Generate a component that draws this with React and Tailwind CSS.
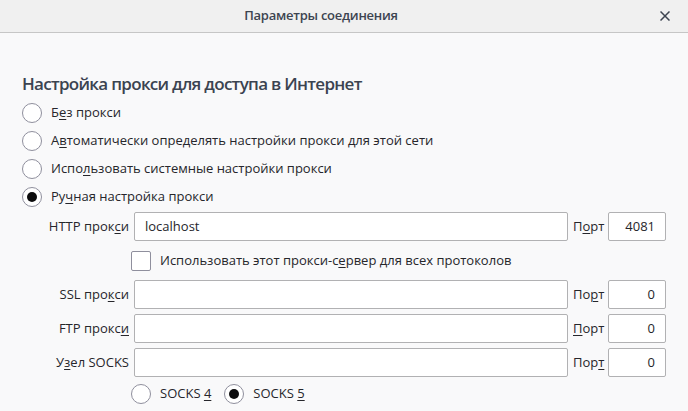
import React from "react";

const U = ({ children }) => (
  <u className="underline decoration-1 underline-offset-[2px]">{children}</u>
);

const Radio = ({ checked }) => (
  <span className="w-[20px] h-[20px] rounded-full border border-[#8f8f9d] bg-white flex items-center justify-center shrink-0">
    {checked && <span className="w-[10px] h-[10px] rounded-full bg-[#0c0c0d]" />}
  </span>
);

const TextBox = ({ value = "", className = "" }) => (
  <div
    className={`h-[29px] bg-white border border-[#b1b1b3] rounded-[2px] flex items-center px-[10px] shrink-0 ${className}`}
  >
    {value}
  </div>
);

const modes = [
  { label: <>Б<U>е</U>з прокси</> },
  { label: <>А<U>в</U>томатически определять настройки прокси для этой сети</> },
  { label: <>Испо<U>л</U>ьзовать системные настройки прокси</> },
  { label: <>Ру<U>ч</U>ная настройка прокси</>, checked: true },
];

const ProxyRow = ({ label, portLabel, host, port }) => (
  <div className="flex items-center h-[29px]">
    <div className="w-[113px] pr-[5px] text-right whitespace-nowrap">{label}</div>
    <TextBox value={host} className="w-[434px]" />
    <div className="ml-[5px] w-[30px] whitespace-nowrap">{portLabel}</div>
    <TextBox value={port} className="ml-[5px] w-[58px] justify-end" />
  </div>
);

export default function App() {
  return (
    <div className="w-[688px] h-[411px] overflow-hidden bg-[#f9f9fa] text-[13px] text-[#26262b] font-['Open_Sans',sans-serif]">
      {/* Title bar */}
      <div className="h-[33px] bg-[#f0f0f0] border-b border-[#c6c6c6] flex items-center">
        <div className="flex-1 text-center font-semibold text-[#3d4450] tracking-[-0.25px]">
          Параметры соединения
        </div>
        <button className="w-[46px] h-full flex items-center justify-center text-[#3d4450]">
          <svg width="10" height="10" viewBox="0 0 10 10" fill="none">
            <path d="M0.5 0.5L9.5 9.5M9.5 0.5L0.5 9.5" stroke="currentColor" strokeWidth="1.5" />
          </svg>
        </button>
      </div>

      <div className="px-[22px]">
        <h2 className="mt-[37px] h-[28px] flex items-center text-[17px] font-semibold text-[#3b4350] tracking-[-0.7px]">
          Настройка прокси для доступа в Интернет
        </h2>

        {/* Mode radios */}
        <div className="mt-[1px] flex flex-col">
          {modes.map((m, i) => (
            <div key={i} className="h-[28px] flex items-center gap-[9px]">
              <Radio checked={m.checked} />
              <span>{m.label}</span>
            </div>
          ))}
        </div>

        {/* Manual settings */}
        <div className="mt-[1px]">
          <ProxyRow
            label={<>HTTP прок<U>с</U>и</>}
            portLabel={<>П<U>о</U>рт</>}
            host="localhost"
            port="4081"
          />

          <div className="h-[39px] flex items-center pl-[109px] gap-[9px]">
            <span className="w-[20px] h-[20px] bg-white border border-[#8f8f9d] rounded-[2px]" />
            <span>
              Использовать этот прокси-с<U>е</U>рвер для всех протоколов
            </span>
          </div>

          <div className="flex flex-col gap-[5px]">
            <ProxyRow
              label={<>SSL про<U>к</U>си</>}
              portLabel={<>По<U>р</U>т</>}
              port="0"
            />
            <ProxyRow
              label={<>FTP прокс<U>и</U></>}
              portLabel={<><U>П</U>орт</>}
              port="0"
            />
            <ProxyRow
              label={<>У<U>з</U>ел SOCKS</>}
              portLabel={<>Пор<U>т</U></>}
              port="0"
            />
          </div>

          <div className="mt-[6px] h-[22px] pl-[109px] flex items-center gap-[13px]">
            <div className="flex items-center gap-[9px]">
              <Radio />
              <span>SOCKS <U>4</U></span>
            </div>
            <div className="flex items-center gap-[9px]">
              <Radio checked />
              <span>SOCKS <U>5</U></span>
            </div>
          </div>
        </div>
      </div>
    </div>
  );
}
